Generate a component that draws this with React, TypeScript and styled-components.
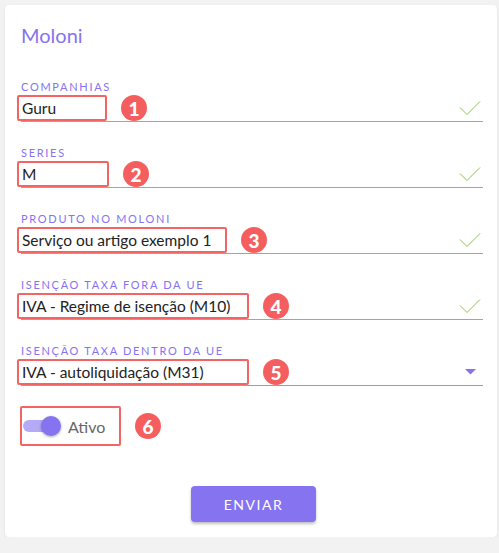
import React, { useState } from 'react'
import styled, { createGlobalStyle } from 'styled-components'

const GlobalStyle = createGlobalStyle`
  html, body {
    margin: 0;
    padding: 0;
    background: #f2f2f2;
  }
  body {
    font-family: Lato, 'Noto Sans', sans-serif;
  }
`

const Page = styled.div`
  padding: 5px 2px 0 5px;
  width: 499px;
  box-sizing: border-box;
`

const Card = styled.div`
  background: #fff;
  border-radius: 4px;
  box-shadow: 0 1px 3px rgba(0, 0, 0, 0.08);
  width: 492px;
  box-sizing: border-box;
  padding: 18px 14px 15px 16px;
  display: flex;
  flex-direction: column;
`

const Title = styled.h1`
  margin: 0 0 34px;
  font-size: 20px;
  line-height: 24px;
  font-weight: 400;
  color: #8573f0;
`

const Fields = styled.div`
  display: flex;
  flex-direction: column;
  gap: 25px;
`

const Field = styled.div`
  display: flex;
  flex-direction: column;
`

const Label = styled.label`
  font-size: 11px;
  line-height: 12px;
  letter-spacing: 1.7px;
  color: #8573f0;
  text-transform: uppercase;
  margin-bottom: 2px;
`

const InputRow = styled.div<{ $valid: boolean }>`
  display: flex;
  align-items: center;
  height: 26px;
  padding-right: 2px;
  border-bottom: 1px solid ${(p) => (p.$valid ? '#8bc34a' : '#9e9e9e')};
`

const Marked = styled.span<{ $width: number }>`
  display: flex;
  align-items: center;
  box-sizing: border-box;
  width: ${(p) => p.$width}px;
  height: 26px;
  margin-left: -4px;
  padding: 0 3px;
  border: 2px solid #f46464;
  border-radius: 2px;
  font-size: 15.5px;
  color: #222;
  white-space: nowrap;
`

const Badge = styled.span`
  width: 26px;
  height: 26px;
  border-radius: 50%;
  background: #f55e5e;
  color: #fff;
  font-weight: 900;
  font-size: 19px;
  display: flex;
  align-items: center;
  justify-content: center;
  margin-left: 14px;
  flex-shrink: 0;
`

const Spacer = styled.span`
  flex: 1;
`

const Check = () => (
  <svg width="22" height="16" viewBox="0 0 22 16">
    <polyline points="1,7.5 8,14.5 21,1.5" fill="none" stroke="#8bc34a" strokeWidth="1" />
  </svg>
)

const Caret = () => (
  <svg width="11" height="6" viewBox="0 0 11 6" style={{ marginRight: 5 }}>
    <polygon points="0,0 11,0 5.5,5.5" fill="#8573f0" />
  </svg>
)

const ToggleBox = styled.label`
  margin-top: 20px;
  margin-left: -1px;
  display: flex;
  align-items: center;
`

const ToggleMark = styled.span`
  display: flex;
  align-items: center;
  gap: 10px;
  width: 101px;
  height: 40px;
  box-sizing: border-box;
  border: 2px solid #f46464;
  border-radius: 2px;
  padding-left: 1px;
`

const Track = styled.span<{ $on: boolean }>`
  position: relative;
  width: 35px;
  height: 12px;
  border-radius: 6px;
  background: ${(p) => (p.$on ? '#b4aaf7' : '#ccc')};
`

const Thumb = styled.span<{ $on: boolean }>`
  position: absolute;
  top: -4px;
  left: ${(p) => (p.$on ? '18px' : '-2px')};
  width: 20px;
  height: 20px;
  border-radius: 50%;
  background: ${(p) => (p.$on ? '#8573f0' : '#f5f5f5')};
  box-shadow: 0 1px 3px rgba(0, 0, 0, 0.35);
`

const ToggleText = styled.span`
  font-size: 16px;
  color: #666;
`

const Footer = styled.div`
  display: flex;
  justify-content: center;
  margin-top: 40px;
  padding-left: 3px;
`

const Button = styled.button`
  width: 125px;
  height: 36px;
  border: none;
  border-radius: 4px;
  background: #8573f0;
  color: #fff;
  font-family: inherit;
  font-size: 14px;
  letter-spacing: 1.5px;
  box-shadow: 0 2px 3px rgba(0, 0, 0, 0.25);
  cursor: pointer;
`

const fields = [
  { label: 'Companhias', value: 'Guru', width: 90, valid: true },
  { label: 'Series', value: 'M', width: 92, valid: true },
  { label: 'Produto no Moloni', value: 'Serviço ou artigo exemplo 1', width: 210, valid: true },
  { label: 'Isenção taxa fora da UE', value: 'IVA - Regime de isenção (M10)', width: 232, valid: true },
  { label: 'Isenção taxa dentro da UE', value: 'IVA - autoliquidação (M31)', width: 232, valid: false },
]

export default function App() {
  const [active, setActive] = useState(true)

  return (
    <Page>
      <GlobalStyle />
      <Card>
        <Title>Moloni</Title>
        <Fields>
          {fields.map((f, i) => (
            <Field key={f.label}>
              <Label>{f.label}</Label>
              <InputRow $valid={f.valid}>
                <Marked $width={f.width}>{f.value}</Marked>
                <Badge>{i + 1}</Badge>
                <Spacer />
                {f.valid ? <Check /> : <Caret />}
              </InputRow>
            </Field>
          ))}
        </Fields>
        <ToggleBox onClick={() => setActive(!active)}>
          <ToggleMark>
            <Track $on={active}>
              <Thumb $on={active} />
            </Track>
            <ToggleText>Ativo</ToggleText>
          </ToggleMark>
          <Badge>6</Badge>
        </ToggleBox>
        <Footer>
          <Button>ENVIAR</Button>
        </Footer>
      </Card>
    </Page>
  )
}
